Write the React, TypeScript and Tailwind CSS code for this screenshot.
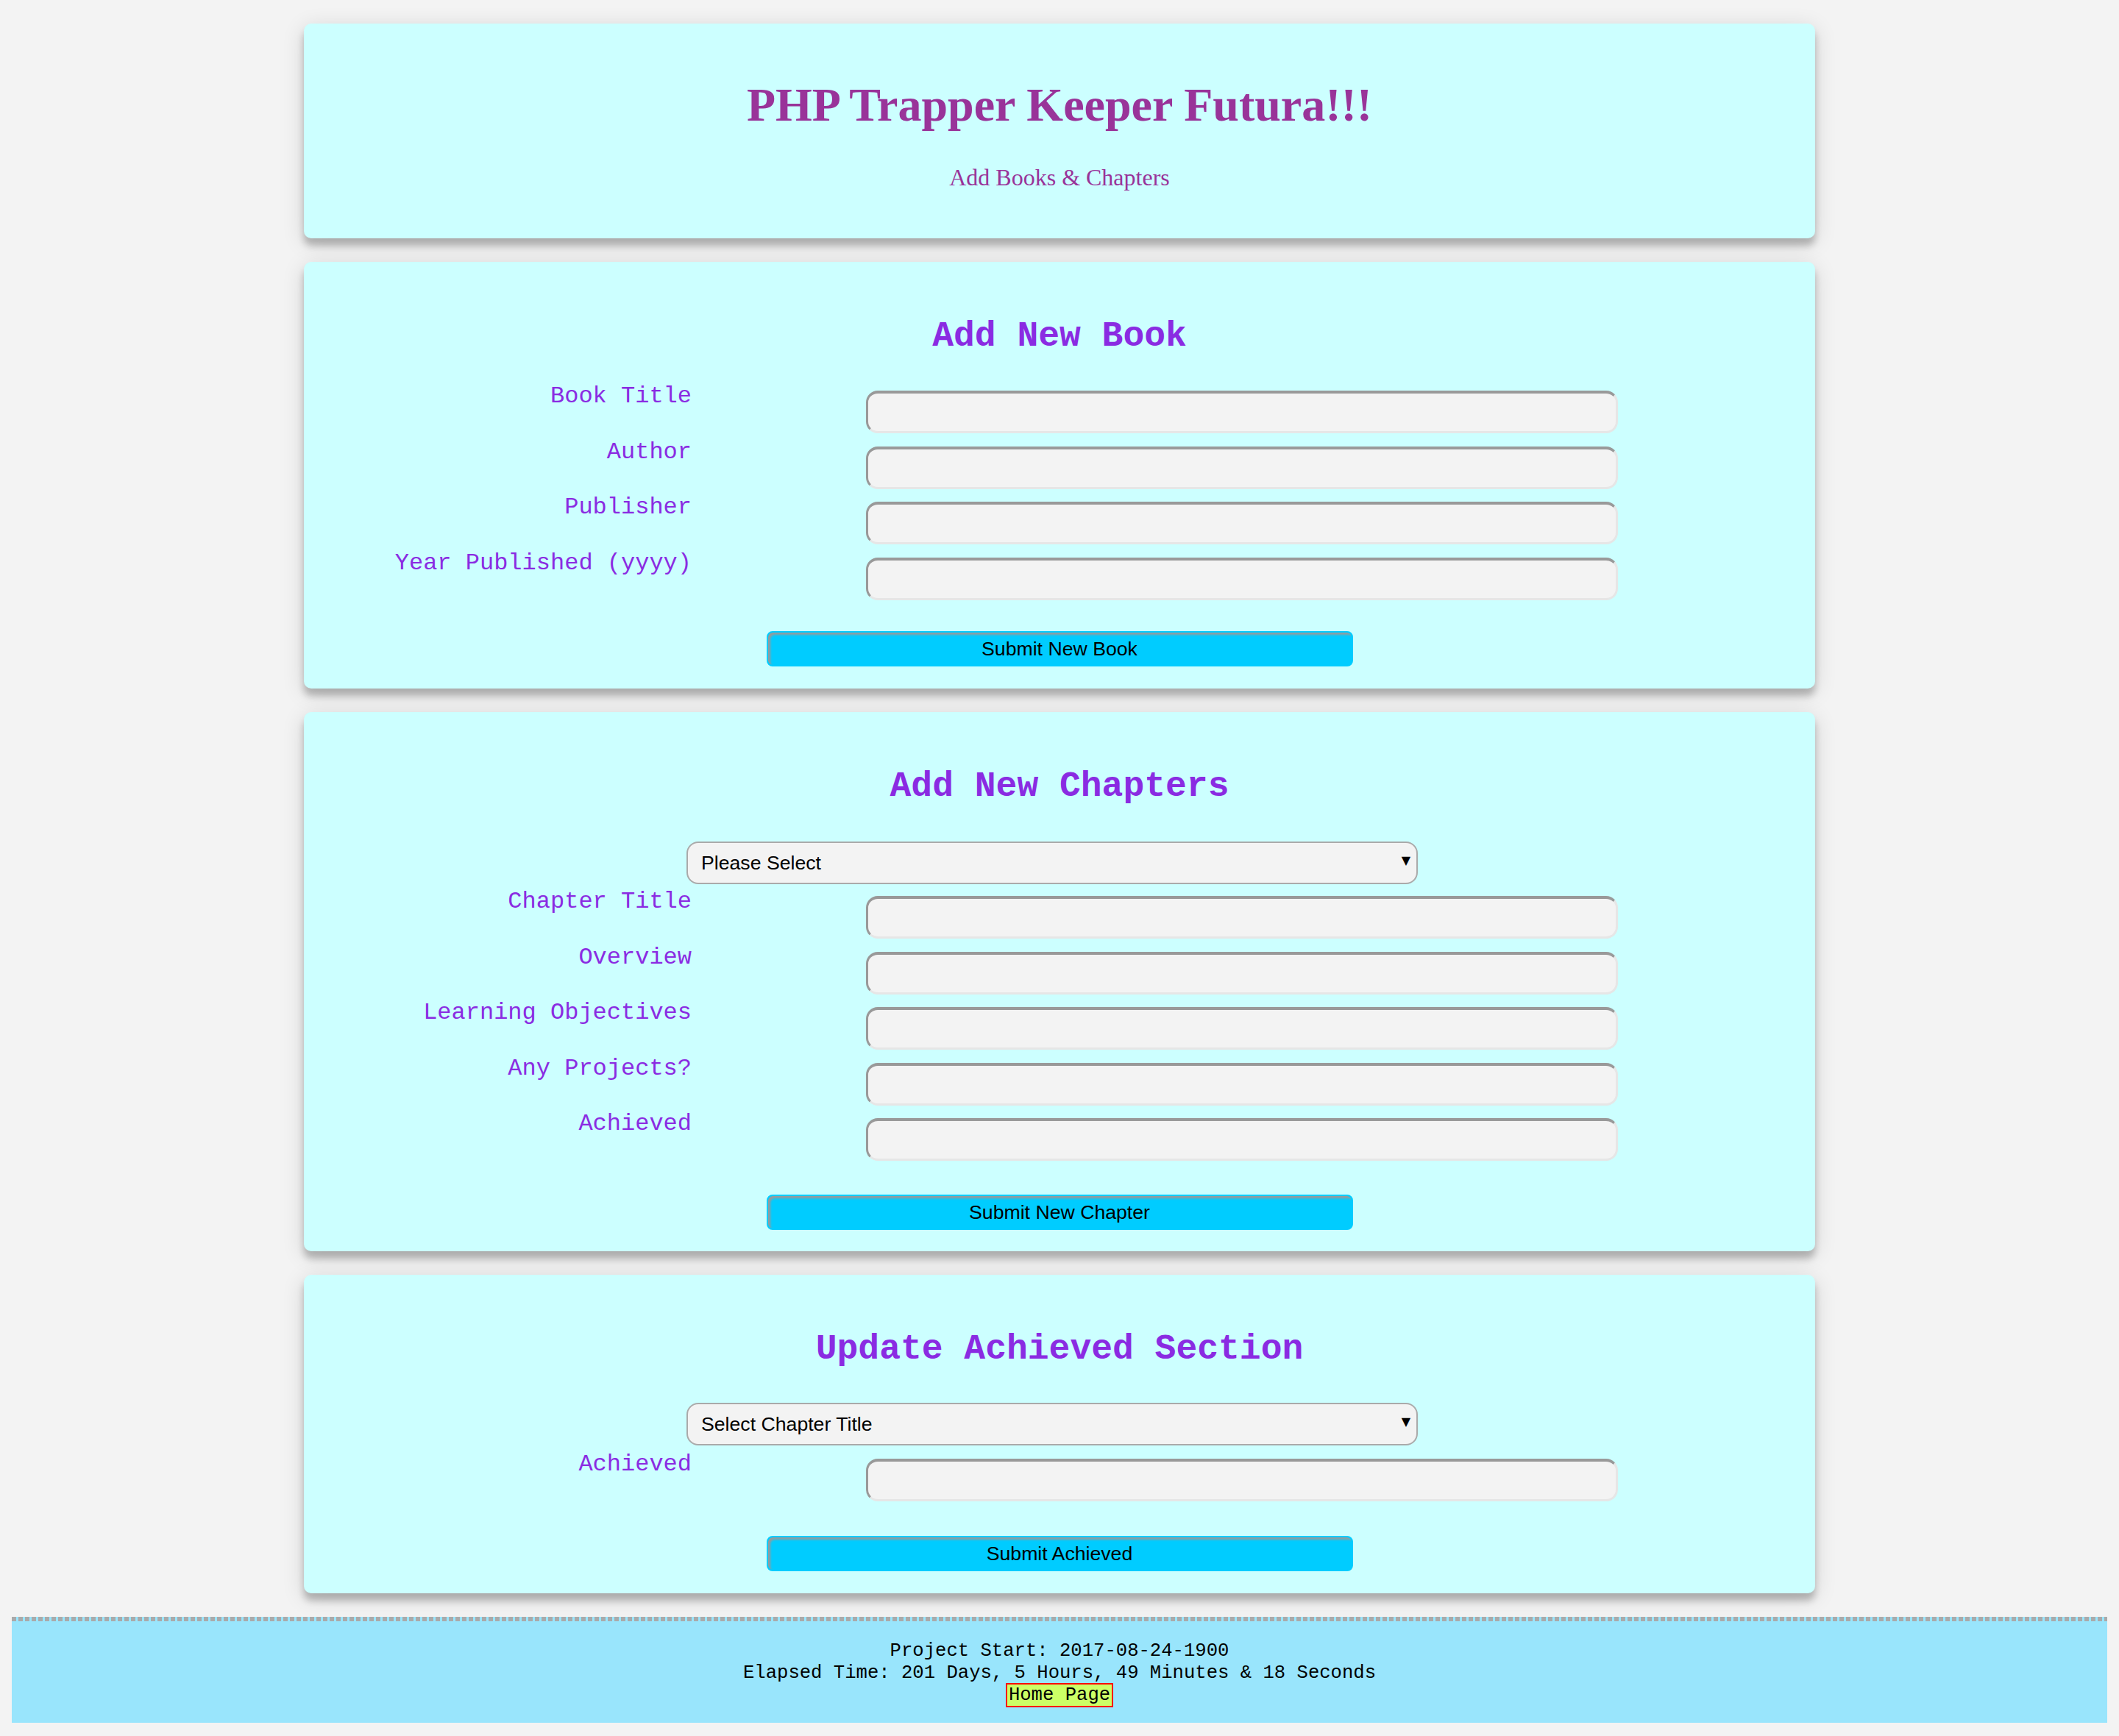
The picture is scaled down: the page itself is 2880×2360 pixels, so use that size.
import React from "react";

const mono = "font-['Liberation_Mono','DejaVu_Sans_Mono',monospace]";
const sans = "font-['Liberation_Sans',Arial,sans-serif]";
const labelCls = `w-[527px] shrink-0 text-right ${mono} text-[32px] leading-[36px] text-[#8a2be2]`;

const Card: React.FC<{ className?: string; children: React.ReactNode }> = ({ className = "", children }) => (
  <section
    className={`mx-auto w-[2054px] rounded-[10px] bg-[#ccffff] shadow-[0_10px_10px_rgba(0,0,0,0.22),0_6px_30px_rgba(0,0,0,0.14)] ${className}`}
  >
    {children}
  </section>
);

const Heading: React.FC<{ children: React.ReactNode }> = ({ children }) => (
  <h2 className={`text-center ${mono} text-[48px] font-bold leading-[54px] text-[#8a2be2]`}>{children}</h2>
);

const Field: React.FC<{ label: string }> = ({ label }) => (
  <div className="flex h-[75.5px] items-start">
    <label className={labelCls}>{label}</label>
    <input
      type="text"
      className="ml-[237px] mt-[10px] h-[58px] w-[1022px] rounded-[16px] border-[3px] border-t-4 border-t-[#999] border-l-[#999] border-r-[#e6e6e6] border-b-[#e6e6e6] bg-[#f3f3f3] outline-none"
    />
  </div>
);

const Picker: React.FC<{ text: string }> = ({ text }) => (
  <div className="pl-[520px]">
    <div className="relative w-[994px]">
      <select
        className={`block h-[58px] w-full appearance-none rounded-[16px] border-2 border-[#aaa] bg-[#f3f3f3] pl-[18px] ${sans} text-[26.67px] text-black`}
        defaultValue=""
      >
        <option value="">{text}</option>
      </select>
      <span className="pointer-events-none absolute right-[10px] top-[14px] font-['DejaVu_Sans',sans-serif] text-[16px] leading-[24px] text-black">
        ▼
      </span>
    </div>
  </div>
);

const SubmitButton: React.FC<{ label: string; className?: string }> = ({ label, className = "" }) => (
  <button
    className={`mx-auto block h-[48px] w-[797px] rounded-[8px] border-2 border-[#00ccff] bg-[#00ccff] shadow-[inset_3px_3px_3px_#9a9a9a] ${sans} text-[26.67px] text-black ${className}`}
  >
    {label}
  </button>
);

export default function App() {
  return (
    <div className="min-h-screen bg-[#f3f3f3] pt-[32px] pb-[16px]">
      <div className="flex flex-col gap-[32px]">
        <Card className="pt-[74px] pb-[64px] text-center font-['Liberation_Serif','Times_New_Roman',serif] text-[#993399]">
          <h1 className="text-[64px] font-bold leading-[74px]">PHP Trapper Keeper Futura!!!</h1>
          <p className="mt-[43px] text-[32px] leading-[37px]">Add Books &amp; Chapters</p>
        </Card>

        <Card className="pt-[74px] pb-[30px]">
          <Heading>Add New Book</Heading>
          <div className="mt-[37px]">
            <Field label="Book Title" />
            <Field label="Author" />
            <Field label="Publisher" />
            <Field label="Year Published (yyyy)" />
          </div>
          <SubmitButton label="Submit New Book" className="mt-[35px]" />
        </Card>

        <Card className="pt-[74px] pb-[29px]">
          <Heading>Add New Chapters</Heading>
          <div className="mt-[48px]">
            <Picker text="Please Select" />
          </div>
          <div className="mt-[6px]">
            <Field label="Chapter Title" />
            <Field label="Overview" />
            <Field label="Learning Objectives" />
            <Field label="Any Projects?" />
            <Field label="Achieved" />
          </div>
          <SubmitButton label="Submit New Chapter" className="mt-[38px]" />
        </Card>

        <Card className="pt-[74px] pb-[30px]">
          <Heading>Update Achieved Section</Heading>
          <div className="mt-[46px]">
            <Picker text="Select Chapter Title" />
          </div>
          <div className="mt-[8px]">
            <Field label="Achieved" />
          </div>
          <SubmitButton label="Submit Achieved" className="mt-[40px]" />
        </Card>

        <footer className="mx-[16px] bg-[#99e5fc]">
          <div className="h-[6px] bg-[repeating-linear-gradient(90deg,#aaaaaa_0_6px,#99e5fc_6px_9px)]" />
          <div className={`pt-[26px] pb-[22px] text-center ${mono} text-[25.6px] leading-[30px] text-black`}>
            <div>Project Start: 2017-08-24-1900</div>
            <div>Elapsed Time: 201 Days, 5 Hours, 49 Minutes &amp; 18 Seconds</div>
            <div>
              <a href="#" className="border-2 border-[#ff0000] bg-[#ccff66] px-[2px] text-black">
                Home Page
              </a>
            </div>
          </div>
        </footer>
      </div>
    </div>
  );
}
